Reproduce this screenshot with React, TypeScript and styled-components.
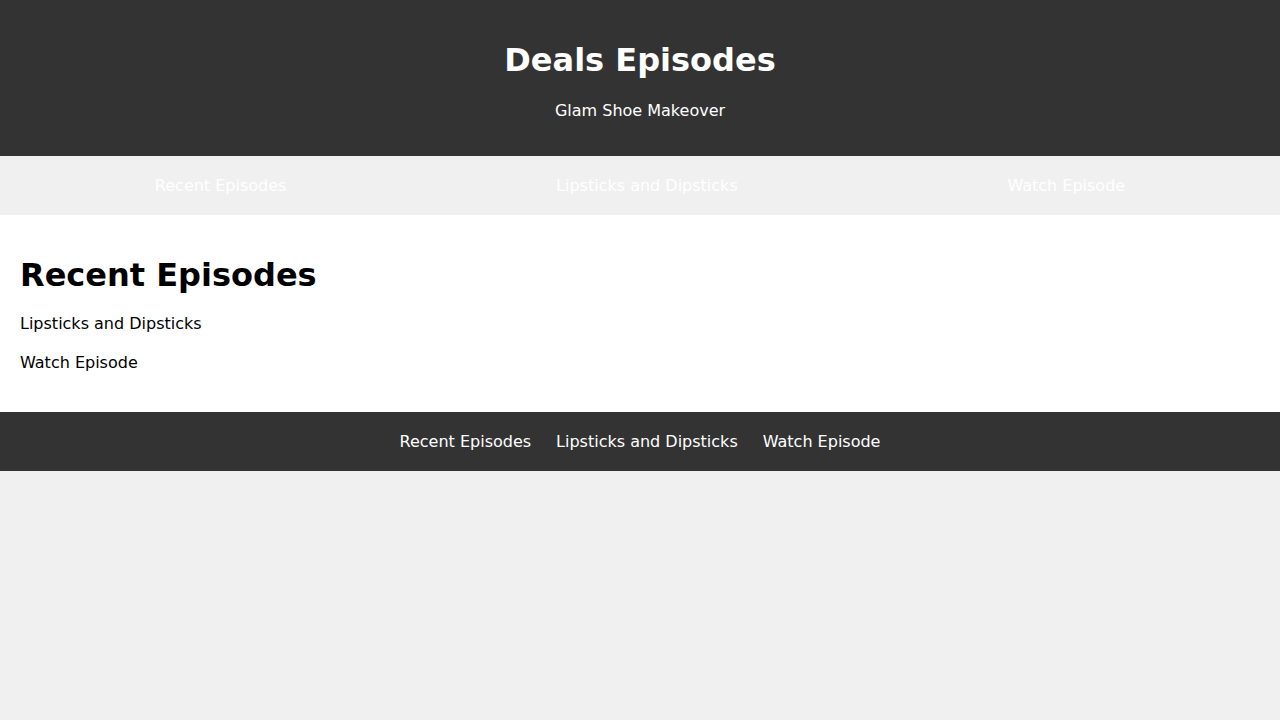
import React from "react";
import styled, { createGlobalStyle } from "styled-components";

const GlobalStyle = createGlobalStyle`
  html, body {
    margin: 0;
    padding: 0;
    background: #f0f0f0;
    font-family: "DejaVu Sans", Verdana, sans-serif;
  }
`;

const Header = styled.header`
  background: #333;
  color: #fff;
  text-align: center;
  padding: 20px;
`;

const Title = styled.h1`
  font-size: 32px;
  font-weight: bold;
  margin: 21.44px 0;
`;

const Subtitle = styled.p`
  font-size: 16px;
  margin: 16px 0;
`;

const Nav = styled.nav`
  display: flex;
  justify-content: space-around;
  padding: 20px;
  background: #f0f0f0;
`;

const NavLink = styled.a`
  color: #fff;
  text-decoration: none;
  font-size: 16px;
`;

const Main = styled.main`
  background: #fff;
  padding: 20px;
`;

const SectionTitle = styled.h1`
  font-size: 32px;
  font-weight: bold;
  margin: 21.44px 0 20px;
  color: #000;
`;

const Item = styled.p`
  margin: 20px 0;
  font-size: 16px;
  color: #000;
`;

const Footer = styled.footer`
  background: #333;
  padding: 20px;
  display: flex;
  justify-content: center;
  gap: 25px;
`;

const FooterLink = styled.a`
  color: #fff;
  text-decoration: none;
  font-size: 16px;
`;

const links = ["Recent Episodes", "Lipsticks and Dipsticks", "Watch Episode"];

export default function App() {
  return (
    <>
      <GlobalStyle />
      <Header>
        <Title>Deals Episodes</Title>
        <Subtitle>Glam Shoe Makeover</Subtitle>
      </Header>
      <Nav>
        {links.map((l) => (
          <NavLink key={l} href="#">
            {l}
          </NavLink>
        ))}
      </Nav>
      <Main>
        <SectionTitle>Recent Episodes</SectionTitle>
        <Item>Lipsticks and Dipsticks</Item>
        <Item>Watch Episode</Item>
      </Main>
      <Footer>
        {links.map((l) => (
          <FooterLink key={l} href="#">
            {l}
          </FooterLink>
        ))}
      </Footer>
    </>
  );
}
